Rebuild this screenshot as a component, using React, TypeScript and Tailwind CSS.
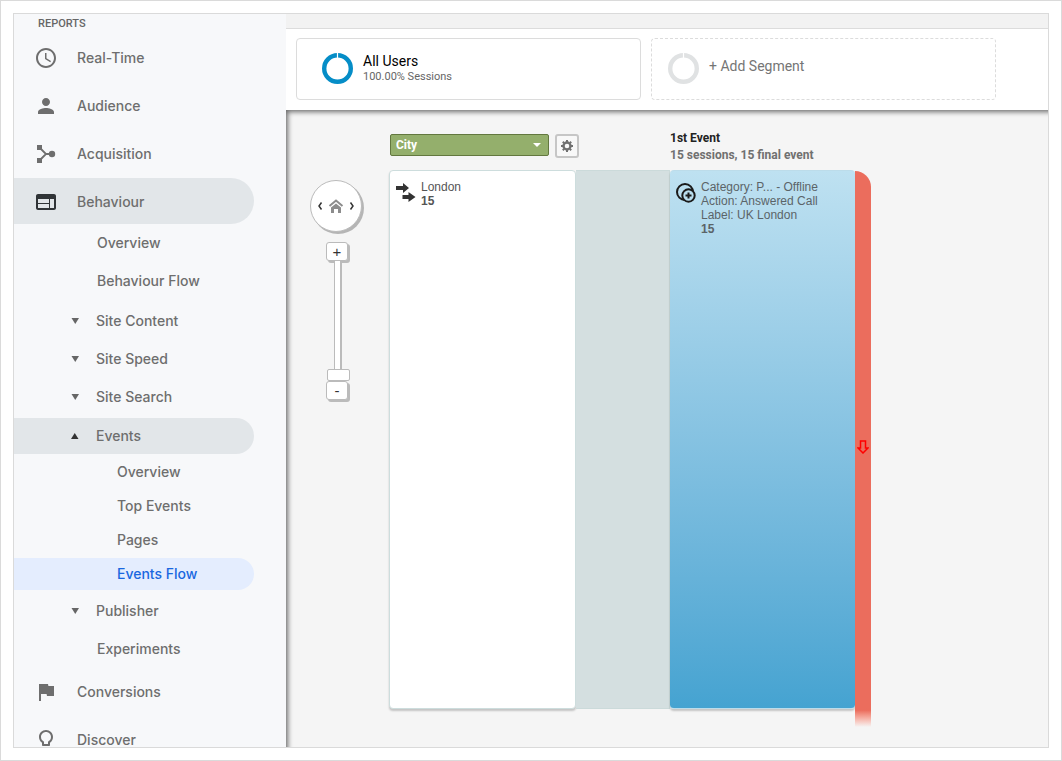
import React, { useState } from "react";
import { MdAccessTime, MdPerson, MdWeb, MdFlag, MdLightbulbOutline } from "react-icons/md";

function AcquisitionIcon() {
  return (
    <svg viewBox="0 0 24 24" className="size-6" fill="currentColor">
      <path d="M3 3h5v5H3zM3 16h5v5H3z" />
      <path d="M6 6l6 6-6 6M12 12h6" fill="none" stroke="currentColor" strokeWidth="1.8" />
      <circle cx="18" cy="12" r="3.2" />
    </svg>
  );
}

function Triangle({ up = false }: { up?: boolean }) {
  return (
    <svg viewBox="0 0 8 6" className={up ? "w-2 h-1.5 text-[#333]" : "w-2 h-1.5 text-[#666]"} fill="currentColor">
      <path d={up ? "M0 6h7.500L3.750 0z" : "M.5 0h7.500L4.250 6z"} />
    </svg>
  );
}

function Donut({ color }: { color: string }) {
  return (
    <svg viewBox="0 0 31 31" className="size-[31px] shrink-0">
      <circle cx="15.5" cy="15.5" r="13.3" fill="none" stroke={color} strokeWidth="4.4" />
      <path d="M15.5 0v5" stroke="#fff" strokeWidth="1.2" />
    </svg>
  );
}

function GearIcon() {
  return (
    <svg viewBox="0 0 14 14" className="size-3.5" fill="none" stroke="#707070">
      <circle cx="7" cy="7" r="3.5" strokeWidth="2.4" />
      <path
        d="M7 1v2M7 11v2M1 7h2M11 7h2M2.8 2.8l1.3 1.3M9.9 9.9l1.3 1.3M2.8 11.2l1.3-1.3M9.9 4.1l1.3-1.3"
        strokeWidth="2"
      />
    </svg>
  );
}

function SourceIcon() {
  return (
    <svg viewBox="0 0 20 20" className="size-5 shrink-0" fill="#333">
      <path d="M0 3h7V0l6 5-6 5V7H0z" />
      <path d="M6.500 12h6V9l7 5-7 5v-3h-6z" />
    </svg>
  );
}

function EventIcon() {
  return (
    <svg viewBox="0 0 20 20" className="size-5 shrink-0" fill="none" stroke="#1a1a1a">
      <circle cx="9" cy="9" r="8" strokeWidth="2" />
      <circle cx="12.5" cy="12.5" r="6.2" fill="#b9deef" strokeWidth="2" />
      <path d="M12.5 9.500v6M9.500 12.500h6" strokeWidth="2" />
    </svg>
  );
}

const topItems = [
  { label: "Real-Time", icon: <MdAccessTime size={24} /> },
  { label: "Audience", icon: <MdPerson size={24} /> },
  { label: "Acquisition", icon: <AcquisitionIcon /> },
];

const bottomItems = [
  { label: "Conversions", icon: <MdFlag size={24} /> },
  { label: "Discover", icon: <MdLightbulbOutline size={24} /> },
];

function TopItem({ label, icon }: { label: string; icon: React.ReactNode }) {
  return (
    <a href="#" className="flex items-center h-12 pl-5 gap-[19px]">
      {icon}
      <span>{label}</span>
    </a>
  );
}

function SubItem({ label, collapsible = false }: { label: string; collapsible?: boolean }) {
  if (!collapsible) {
    return (
      <a href="#" className="flex items-center h-[38px] pl-[83px]">
        {label}
      </a>
    );
  }
  return (
    <button type="button" className="flex items-center w-full h-[38px] pl-[57px] gap-[17px]">
      <Triangle />
      {label}
    </button>
  );
}

function Sidebar() {
  return (
    <nav className="w-[272px] shrink-0 overflow-hidden bg-[#f7f8fa] font-['Inter',sans-serif] text-sm font-medium text-[#6e6e6e]">
      <h2 className="h-5 pl-6 font-['Roboto',sans-serif] text-[11px] leading-5 font-medium text-[#666]">REPORTS</h2>
      {topItems.map((item) => (
        <TopItem key={item.label} {...item} />
      ))}
      <a href="#" className="flex items-center h-[46px] mr-8 pt-0.5 pl-5 gap-[19px] rounded-r-full bg-[#e2e6e9]">
        <MdWeb size={24} className="text-[#303437]" />
        <span>Behaviour</span>
      </a>
      <SubItem label="Overview" />
      <SubItem label="Behaviour Flow" />
      <div className="py-0.5">
        <SubItem label="Site Content" collapsible />
        <SubItem label="Site Speed" collapsible />
        <SubItem label="Site Search" collapsible />
      </div>
      <button
        type="button"
        className="flex items-center w-60 h-9 pl-[57px] gap-[17px] rounded-r-full bg-[#e2e6e9]"
      >
        <Triangle up />
        Events
      </button>
      <div className="py-px">
        {["Overview", "Top Events", "Pages"].map((label) => (
          <a key={label} href="#" className="flex items-center h-[34px] pl-[103px]">
            {label}
          </a>
        ))}
        <a
          href="#"
          aria-current="page"
          className="flex items-center h-8 my-px mr-8 pl-[103px] rounded-r-full bg-[#e4edfe] text-[#1967e0]"
        >
          Events Flow
        </a>
      </div>
      <SubItem label="Publisher" collapsible />
      <SubItem label="Experiments" />
      {bottomItems.map((item) => (
        <TopItem key={item.label} {...item} />
      ))}
    </nav>
  );
}

function Segments() {
  return (
    <div className="grid grid-cols-2 gap-2.5 pt-[9px] pb-2.5 pl-2.5 pr-13 bg-white">
      <button
        type="button"
        className="flex items-center h-[62px] pb-0.5 pl-[25px] gap-2.5 text-left border border-[#dcdcdc] rounded-[4px]"
      >
        <Donut color="#058dc7" />
        <span className="pt-0.5">
          <span className="block text-sm leading-4 text-black">All Users</span>
          <span className="block text-[11px] leading-4 text-[#666]">100.00% Sessions</span>
        </span>
      </button>
      <button
        type="button"
        className="flex items-center h-[62px] pb-0.5 pl-4 gap-2.5 text-left border border-dashed border-[#dcdcdc] rounded-[4px]"
      >
        <Donut color="#e0e2e3" />
        <span className="pb-1 text-sm text-[#757575]">+ Add Segment</span>
      </button>
    </div>
  );
}

function ZoomControls() {
  const [zoom, setZoom] = useState(0);
  const stepButton =
    "flex items-center justify-center w-[22px] h-[19px] border border-[#bbb] rounded-[3px] bg-white shadow-[2px_2px_0_#bbb] font-['Liberation_Sans',sans-serif] text-[15px] leading-none text-[#333]";

  return (
    <div className="w-[53px] pt-[46px]">
      <div className="flex items-center justify-center gap-[5px] size-[52px] rounded-full border border-[#bbb] bg-white shadow-[2px_2px_0_#b5b5b5]">
        <button type="button" aria-label="Pan left">
          <svg viewBox="0 0 6 10" className="w-1.5 h-2.5" fill="none" stroke="#333" strokeWidth="1.5">
            <path d="M4.5 1.5L2 5l2.5 3.5" />
          </svg>
        </button>
        <button type="button" aria-label="Home">
          <svg viewBox="0 0 16 14" className="w-4 h-3.5" fill="#8c8c8c">
            <path d="M1.500 7L8 1.500 14.500 7" fill="none" stroke="#8c8c8c" strokeWidth="2" />
            <path d="M3 8.500l5-4 5 4V14h-3v-4H6v4H3z" />
          </svg>
        </button>
        <button type="button" aria-label="Pan right">
          <svg viewBox="0 0 6 10" className="w-1.5 h-2.5" fill="none" stroke="#333" strokeWidth="1.5">
            <path d="M1.5 1.5L4 5l-2.5 3.5" />
          </svg>
        </button>
      </div>
      <div className="flex flex-col items-start pt-2.5 pl-4">
        <button type="button" className={stepButton} onClick={() => setZoom(Math.min(10, zoom + 1))}>
          +
        </button>
        <div className="relative flex justify-center w-6 h-[120px]">
          <div className="w-2 border-l border-r-2 border-[#bbb] bg-white" />
          <input
            type="range"
            aria-label="Zoom"
            min={0}
            max={10}
            value={zoom}
            onChange={(e) => setZoom(Number(e.target.value))}
            className="absolute inset-0 w-6 h-[120px] m-0 appearance-none bg-transparent [writing-mode:vertical-lr] [direction:rtl] [&::-webkit-slider-thumb]:appearance-none [&::-webkit-slider-thumb]:w-[23px] [&::-webkit-slider-thumb]:h-3 [&::-webkit-slider-thumb]:rounded-[2px] [&::-webkit-slider-thumb]:border [&::-webkit-slider-thumb]:border-[#bbb] [&::-webkit-slider-thumb]:bg-white"
          />
        </div>
        <button type="button" className={stepButton} onClick={() => setZoom(Math.max(0, zoom - 1))}>
          -
        </button>
      </div>
    </div>
  );
}

function FlowCanvas() {
  return (
    <div className="flex flex-1 min-h-0 gap-[26px] pt-6 pl-6 pb-5 bg-[#f5f5f5] shadow-[inset_5px_5px_5px_-3px_rgba(0,0,0,0.55)]">
      <ZoomControls />
      <div className="grid grid-cols-[187px_94px_185px_16px] grid-rows-[36px_1fr]">
        <div className="flex items-start col-span-2 gap-1.5 pl-px">
          <div className="relative flex">
            <select
              aria-label="Dimension"
              className="w-[159px] h-[22px] pl-[5px] appearance-none border border-[#63783f] rounded-[2px] bg-[#94af6c] text-xs font-bold text-white"
            >
              <option>City</option>
            </select>
            <svg viewBox="0 0 8 4" className="absolute right-2 top-[9px] w-2 h-1 pointer-events-none" fill="#fff">
              <path d="M0 0h8L4 4z" />
            </svg>
          </div>
          <button
            type="button"
            aria-label="Settings"
            className="flex items-center justify-center size-6 border-2 border-[#c6c6c6] rounded-[3px] bg-[#f8f8f8]"
          >
            <GearIcon />
          </button>
        </div>
        <div className="col-span-2 -mt-1 text-xs leading-[17px] font-bold whitespace-nowrap">
          <h3 className="text-[#222]">1st Event</h3>
          <p className="text-[#707070]">15 sessions, 15 final event</p>
        </div>

        <div className="flex items-start gap-[5px] mb-[18px] pt-[9px] pl-1.5 border border-[#cddddd] rounded-[4px] bg-white shadow-[0_2px_2px_rgba(0,0,0,0.2)] font-['Liberation_Sans',sans-serif] text-xs leading-[14px] text-[#555]">
          <div className="pt-[3px]">
            <SourceIcon />
          </div>
          <div>
            <p>London</p>
            <p className="font-bold">15</p>
          </div>
        </div>
        <div className="mb-[18px] border-y border-r border-[#cbdada] bg-[#d4dfe0]" />
        <div className="flex items-start gap-[5px] mb-[18px] pt-[9px] pl-1.5 border-y border-[#bcdcea] rounded-[4px] bg-linear-to-b from-[#bee1f1] to-[#45a3d1] shadow-[0_2px_2px_rgba(0,0,0,0.2)] font-['Liberation_Sans',sans-serif] text-xs leading-[14px] text-[#5b6468]">
          <div className="pt-[3px]">
            <EventIcon />
          </div>
          <div>
            <p>Category: P... - Offline</p>
            <p>Action: Answered Call</p>
            <p>Label: UK London</p>
            <p className="font-bold">15</p>
          </div>
        </div>
        <div className="flex items-center justify-center mt-px pb-1 rounded-tr-[16px] bg-linear-to-b from-[#eb6d5d] from-97% to-[#f5f5f5]">
          <svg viewBox="0 0 12 14" className="w-3 h-3.5" fill="none" stroke="#f00" strokeWidth="1.5">
            <path d="M3.5 1h5v7H11l-5 5-5-5h2.5z" />
          </svg>
        </div>
      </div>
    </div>
  );
}

export default function App() {
  return (
    <div className="h-screen p-3 border border-[#dadada] bg-white font-['Roboto',sans-serif]">
      <div className="flex h-full overflow-hidden border border-[#dadada]">
        <Sidebar />
        <main className="flex flex-col flex-1 min-w-0">
          <div className="h-[15px] shrink-0 border-b border-[#dcdcdc] bg-[#f2f2f2]" />
          <Segments />
          <FlowCanvas />
        </main>
      </div>
    </div>
  );
}
